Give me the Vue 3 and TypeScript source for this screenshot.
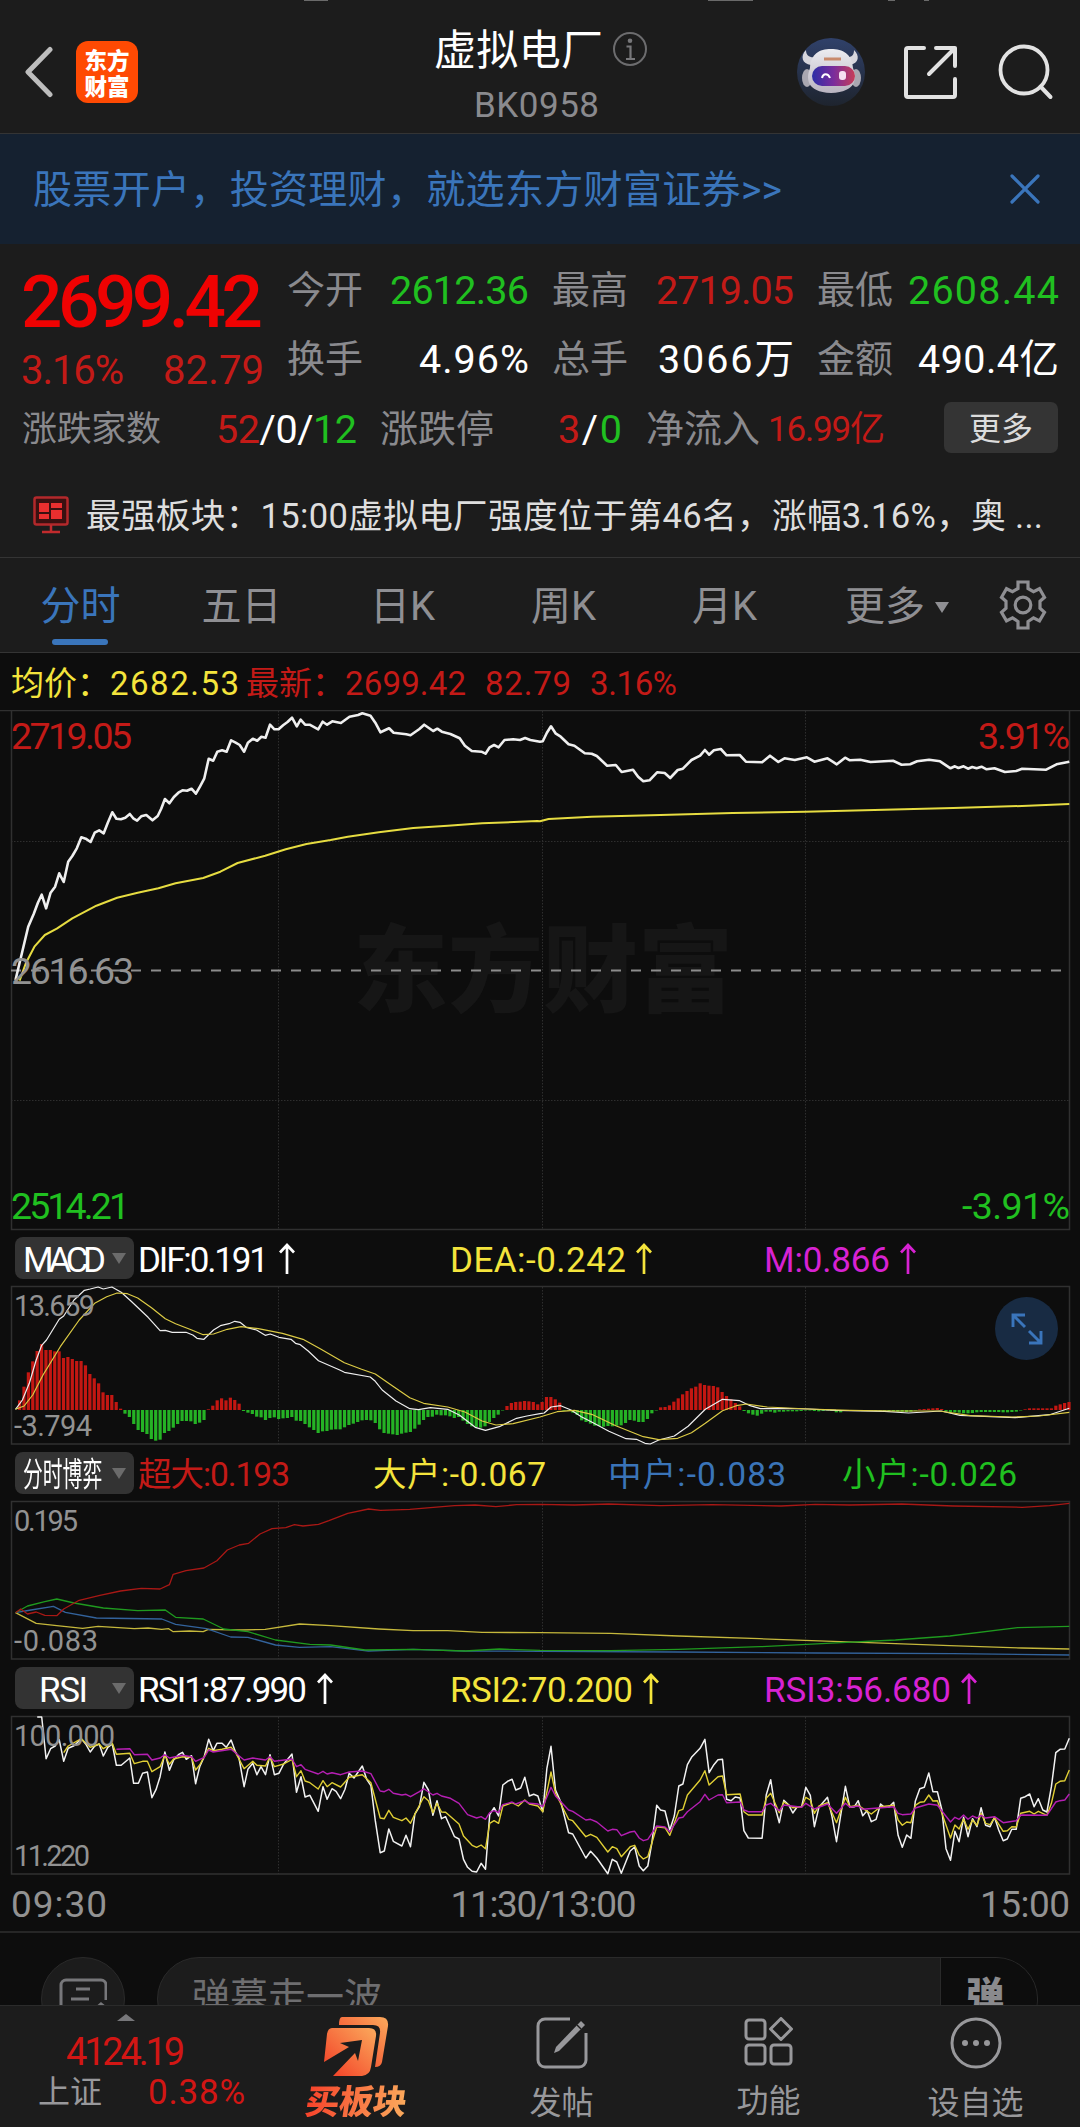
<script setup lang="ts">
import type { Directive } from 'vue'

// Tracks a label out (or in) so that it fills the given width in pixels.
const fit = (el: HTMLElement, width: number) => {
  const count = (el.textContent ?? '').trim().length
  if (count < 2) return
  const spacing = (width - el.getBoundingClientRect().width) / (count - 1)
  el.style.letterSpacing = `${spacing}px`
  el.style.marginRight = `${-spacing}px`
}
const vFit: Directive<HTMLElement, number> = { mounted: (el, { value }) => fit(el, value) }

// Samples are stored per half of the session, as "x,y" pairs in chart units.
const HALF = 540
const SX = 2.904
const SY = 3
const half = (src: string, ox: number, oy: number) =>
  src.trim().split(/\s+/).map((p) => {
    const [x, y] = p.split(',').map(Number)
    return `${(ox + x / SX).toFixed(1)},${(oy + y / SY).toFixed(1)}`
  }).join(' ')
const series = (oy: number, am: string, pm: string) => `${half(am, 0, oy)} ${half(pm, HALF, oy)}`

const price = series(550,
  `45,1290 60,1225 82,1130 98,1092 110,1058 121,1034 134,1075 147,1028 160,1010 172,970 185,996 198,935 210,918 223,895 236,862 249,866 263,876 275,848 288,841 301,850 313,818 326,787 338,806 351,808 364,803 377,792 388,806 398,812 410,799 425,795 443,811 458,798 468,776 479,747 492,760 505,741 518,728 530,721 543,722 556,716 569,731 581,709 593,686 606,626 619,632 631,605 645,601 658,605 671,571 683,577 696,585 709,605 720,578 734,566 747,572 759,560 771,563 784,524 797,538 809,538 822,526 835,516 848,503 862,529 873,509 886,524 899,524 924,538 937,515 950,524 965,514 990,519 1015,500 1040,495 1052,490 1076,497 1090,518 1105,547 1130,535 1143,548 1180,553 1192,556 1218,537 1232,524 1258,543 1270,536 1283,545 1308,552 1335,565 1350,587 1370,603 1398,605 1410,611 1422,592 1435,585 1448,592 1465,570 1490,568 1510,570 1525,564 1540,570`,
  `0,575 8,574 20,548 32,529 45,550 60,560 83,583 100,587 130,610 150,611 165,618 195,647 220,645 237,666 270,659 285,680 300,694 318,691 340,667 362,669 378,684 400,660 415,656 440,630 465,617 479,600 491,614 505,601 525,597 542,616 580,615 598,635 645,637 668,617 692,636 710,625 740,630 775,622 797,635 835,625 862,643 886,623 900,631 930,629 960,636 1025,632 1050,644 1075,643 1095,634 1130,629 1162,634 1192,655 1205,649 1215,654 1230,649 1243,656 1255,651 1268,655 1282,650 1297,658 1320,655 1350,666 1383,663 1400,656 1470,659 1500,643 1537,635`)
const average = series(550,
  `57,1292 75,1240 100,1190 130,1155 165,1136 210,1105 280,1067 340,1043 400,1028 460,1015 510,1000 590,984 640,965 690,939 770,917 830,898 890,882 960,870 1010,860 1100,847 1200,834 1300,827 1400,820 1560,813`,
  `0,814 25,807 150,800 350,795 560,789 770,785 1000,779 1200,774 1400,768 1537,762`)

const dif = series(1220,
  `45,568 65,540 85,490 105,420 121,376 135,360 172,298 185,288 215,240 245,211 262,207 285,201 300,207 325,201 352,217 380,243 430,292 465,332 480,331 500,337 540,337 560,345 572,355 592,358 620,330 640,317 665,311 682,304 697,307 715,322 745,330 770,346 785,342 810,352 845,358 858,370 872,374 895,393 925,422 985,449 1000,457 1075,471 1090,484 1110,510 1150,543 1190,566 1215,569 1250,563 1300,568 1335,586 1380,622 1410,631 1450,620 1500,595 1530,588`,
  `0,581 12,579 32,561 60,557 90,570 120,590 150,606 200,634 250,656 280,658 305,670 320,672 345,660 390,648 430,619 480,568 530,538 580,542 610,557 640,566 700,565 780,567 860,571 1000,574 1070,579 1165,573 1220,586 1380,593 1480,584 1537,565`)
const dea = series(1220,
  `45,568 70,558 95,525 125,465 175,380 230,300 275,250 310,230 340,219 370,221 400,234 440,263 480,296 510,311 555,329 590,344 620,342 660,328 700,320 750,326 820,340 880,358 930,386 1000,428 1050,448 1090,462 1140,498 1190,533 1230,550 1300,561 1350,576 1400,603 1440,615 1490,611`,
  `0,591 50,575 100,571 150,583 220,617 300,650 345,659 400,655 440,638 480,610 530,572 570,557 600,552 660,561 780,567 900,571 1030,573 1160,573 1250,587 1370,591 1450,588 1537,577`)

// Histogram bar ends, one per minute; values above ZERO are red, below are green.
const ZERO = 570
const histogram = [
  541, 500, 457, 424, 393, 372, 390, 390, 394, 394, 414, 411, 417, 423, 423, 436, 462, 475, 490, 517, 525, 525, 546, 566,
  581, 591, 612, 630, 636, 642, 657, 662, 659, 639, 633, 623, 612, 603, 603, 604, 612, 608, 600, 568, 557, 541, 535, 541,
  533, 540, 551, 573, 578, 582, 590, 592, 600, 594, 592, 597, 595, 594, 591, 602, 603, 612, 622, 630, 639, 634, 633, 629,
  628, 628, 622, 615, 611, 606, 601, 600, 601, 609, 628, 639, 641, 643, 645, 641, 638, 636, 626, 614, 600, 591, 590, 584,
  586, 586, 589, 594, 591, 602, 612, 619, 621, 623, 619, 606, 594, 584, 570, 558, 549, 546, 545, 543, 544, 546, 553,
  546, 531, 531, 538, 548, 572, 572, 578, 585, 601, 606, 611, 617, 618, 620, 618, 619, 617, 616, 609, 600, 602, 606, 606,
  597, 580, 570, 562, 561, 556, 545, 535, 523, 513, 505, 500, 490, 495, 497, 498, 502, 516, 528, 538, 549, 559, 573, 580,
  584, 587, 581, 575, 575, 578, 575, 575, 574, 574, 574, 573, 571, 571, 573, 574, 573, 571, 573, 577, 577, 571, 571, 571,
  571, 571, 571, 571, 572, 572, 572, 573, 574, 575, 575, 576, 575, 571, 568, 567, 566, 565, 564, 567, 574, 576, 577, 578,
  580, 580, 579, 577, 576, 576, 576, 576, 576, 577, 577, 576, 575, 571, 568, 565, 565, 565, 565, 565, 565, 557, 553, 549, 546,
]
const step = (1069 - 19.6) / (histogram.length - 1)
const bars = histogram.map((v, i) => ({
  x: 19.6 + i * step - 1.6,
  y: 1220 + Math.min(v, ZERO) / SY,
  h: Math.max(Math.abs(v - ZERO) / SY, 0.5),
  up: v < ZERO,
}))

const flow = {
  huge: series(1450,
    `45,488 60,477 80,492 105,486 130,496 165,497 185,477 230,451 290,436 350,423 410,415 465,417 492,404 503,373 540,362 592,354 630,332 660,300 695,285 722,280 755,252 790,236 830,233 855,224 880,228 925,223 955,212 1010,190 1070,177 1105,181 1190,178 1250,173 1320,167 1380,165 1440,170 1500,164`,
    `0,163 100,165 200,162 350,167 500,164 700,168 800,163 900,165 1050,162 1200,168 1400,172 1480,167 1537,160`),
  big: series(1450,
    `45,488 105,520 165,527 240,535 285,529 390,536 430,534 470,538 490,536 503,545 550,543 590,545 605,538 700,540 770,538 870,522 960,527 1100,537 1200,542 1300,542 1400,547`,
    `0,548 205,550 402,558 638,566 954,578 1190,587 1400,594 1537,597`),
  mid: series(1450,
    `45,488 90,480 155,469 190,487 280,504 470,507 510,523 600,536 670,561 720,562 800,585 870,592 960,590 1070,603 1200,598 1350,603`,
    `0,604 400,606 800,609 1200,611 1537,615`),
  small: series(1450,
    `45,488 80,468 130,455 165,447 215,459 300,474 400,482 480,480 510,502 590,507 650,537 720,545 800,570 900,583 960,585 1060,600 1200,598 1350,603 1450,597`,
    `0,601 205,602 402,598 638,590 875,578 1032,570 1190,558 1387,533 1537,529`),
}

const rsi = {
  fast: series(1660,
    `108,171 121,171 134,296 147,266 160,258 172,239 185,304 198,265 215,257 236,236 249,252 262,276 275,258 288,252 300,288 313,262 326,252 338,316 352,316 377,294 388,370 402,370 414,340 428,336 441,413 453,389 465,350 479,276 492,331 504,300 518,284 530,277 541,298 556,287 568,371 580,320 593,290 606,238 619,272 630,250 645,250 657,262 671,240 683,274 694,294 709,380 720,328 734,310 746,344 758,320 771,344 784,284 797,344 810,340 824,312 848,282 861,397 874,350 886,411 900,406 924,454 938,380 950,418 964,386 976,394 989,416 1002,388 1014,340 1028,354 1052,318 1065,358 1077,377 1090,482 1104,578 1116,573 1129,507 1142,544 1167,558 1179,526 1192,560 1205,462 1218,440 1231,367 1244,390 1257,466 1269,422 1282,476 1294,470 1320,530 1333,537 1346,598 1358,622 1371,634 1384,636 1397,610 1410,628 1422,464 1435,443 1448,468 1460,375 1474,364 1487,358 1498,390 1512,384 1524,352 1537,408 1550,403 1562,408`,
    `8,455 20,325 32,259 45,390 60,425 83,518 95,522 133,594 147,574 165,594 197,641 210,598 223,606 236,640 262,573 275,561 288,618 300,632 313,618 325,548 339,436 350,450 363,453 377,510 390,468 403,378 415,372 428,314 440,292 465,265 479,238 491,338 505,314 517,299 530,298 542,418 555,422 567,411 581,414 592,512 605,534 645,535 657,405 670,359 682,438 695,488 708,421 722,434 734,459 747,440 760,440 772,382 785,406 797,500 810,442 835,412 848,470 861,545 874,460 887,379 900,442 913,440 924,422 937,467 950,452 962,485 976,478 989,432 1000,442 1013,442 1027,427 1040,526 1052,562 1065,525 1077,535 1090,424 1103,386 1116,382 1129,339 1141,395 1154,395 1167,450 1179,566 1192,601 1205,514 1217,545 1230,472 1243,530 1256,476 1269,500 1281,443 1294,496 1307,500 1320,472 1332,510 1345,542 1357,537 1370,508 1383,508 1396,415 1409,410 1422,402 1435,440 1447,416 1460,450 1472,456 1485,380 1498,278 1510,268 1524,267 1537,235`),
  medium: series(1660,
    `185,278 198,258 236,236 262,262 288,252 300,266 326,250 338,283 377,280 390,311 414,304 428,304 441,335 465,320 479,286 492,313 504,297 530,290 556,292 568,330 580,315 606,265 619,272 645,268 671,262 683,276 709,326 734,304 746,316 771,318 784,290 797,320 824,312 848,298 861,350 874,332 886,363 900,368 924,387 938,362 950,380 964,368 989,381 1014,352 1052,344 1077,368 1104,474 1116,476 1129,451 1142,472 1167,482 1179,474 1192,490 1205,462 1231,410 1244,422 1257,458 1269,430 1282,456 1294,457 1333,492 1346,528 1371,556 1384,562 1397,555 1410,566 1422,490 1435,482 1448,490 1460,438 1487,428 1505,438 1524,420 1537,432 1562,438`,
    `8,455 32,336 45,400 83,478 95,482 133,530 147,523 165,532 197,576 210,560 223,566 236,590 262,560 275,556 288,585 300,597 313,590 339,500 363,503 377,526 403,452 415,448 428,405 465,360 479,332 491,375 517,350 530,348 542,404 581,402 592,455 605,465 645,465 657,415 670,400 695,458 708,426 734,443 760,440 772,412 785,420 797,460 810,438 835,428 861,488 887,412 900,440 924,436 962,462 989,440 1027,436 1040,480 1052,496 1065,486 1077,488 1090,436 1103,427 1116,425 1129,405 1141,423 1154,422 1167,460 1192,534 1205,495 1217,507 1230,477 1243,508 1256,480 1269,496 1281,460 1294,490 1307,494 1320,473 1345,514 1357,512 1370,500 1383,501 1396,460 1422,454 1435,462 1447,454 1472,466 1485,430 1498,372 1510,364 1524,362 1537,330`),
  slow: series(1660,
    `338,268 377,266 390,284 428,283 441,300 465,294 479,284 492,294 530,286 556,290 568,304 593,292 606,270 619,276 671,268 709,300 734,294 771,300 784,290 797,304 848,297 861,320 874,314 886,328 924,342 938,334 950,342 964,338 989,344 1014,336 1052,333 1077,341 1104,393 1116,395 1129,388 1142,400 1167,405 1179,403 1192,410 1218,395 1231,386 1257,405 1269,400 1282,408 1308,415 1333,430 1358,464 1384,474 1397,470 1410,478 1422,458 1435,452 1448,458 1460,434 1487,426 1498,432 1524,422 1537,430 1562,432`,
    `8,440 32,382 45,408 83,450 95,454 133,480 147,478 165,486 197,513 210,508 223,509 236,527 262,516 275,514 288,534 300,542 313,538 339,498 363,501 377,515 403,474 415,472 428,455 465,425 479,403 491,420 517,405 530,404 542,428 581,426 592,450 605,455 645,455 657,435 670,430 695,452 708,435 760,442 772,430 797,447 835,432 861,460 887,430 900,442 924,438 937,448 1027,440 1040,460 1052,464 1077,462 1090,444 1129,432 1154,436 1192,486 1205,472 1217,478 1230,465 1243,478 1256,468 1269,474 1281,466 1294,474 1320,470 1345,488 1383,482 1396,465 1472,466 1498,426 1510,422 1524,420 1537,402`),
}

const stats = [
  { label: '今开', value: '2612.36', tone: 'green', w: 139 },
  { label: '最高', value: '2719.05', tone: 'red', w: 138 },
  { label: '最低', value: '2608.44', tone: 'green', w: 151 },
  { label: '换手', value: '4.96%', tone: 'white', w: 110 },
  { label: '总手', value: '3066万', tone: 'white', w: 136 },
  { label: '金额', value: '490.4亿', tone: 'white', w: 141 },
]
const tabs = ['分时', '五日', '日K', '周K', '月K']
const gridX = [278.5, 542.5, 805.5]

const macdLegend = [
  { text: 'DIF:0.191', w: 131, tone: 'white' },
  { text: 'DEA:-0.242', w: 176, tone: 'yellow' },
  { text: 'M:0.866', w: 126, tone: 'magenta' },
]
const flowLegend = [
  { text: '超大:0.193', w: 152, tone: 'red' },
  { text: '大户:-0.067', w: 173, tone: 'yellow' },
  { text: '中户:-0.083', w: 178, tone: 'blue' },
  { text: '小户:-0.026', w: 175, tone: 'green' },
]
const rsiLegend = [
  { text: 'RSI1:87.990', w: 169, tone: 'white' },
  { text: 'RSI2:70.200', w: 183, tone: 'yellow' },
  { text: 'RSI3:56.680', w: 187, tone: 'magenta' },
]
</script>

<template>
  <main class="page">
    <header class="top">
      <i class="sliver s1" /><i class="sliver s2" /><i class="sliver s3" /><i class="sliver s4" />
      <svg class="back" width="30" height="56" viewBox="0 0 30 56"><path d="M27 5.500 5 28l22 22.500" fill="none" stroke="#bdbdbd" stroke-width="5" stroke-linecap="round" stroke-linejoin="round" /></svg>
      <div class="logo"><span>东方</span><span>财富</span></div>
      <div class="title">
        <div class="name">
          <span v-fit="169">虚拟电厂</span>
          <svg width="36" height="36" viewBox="0 0 36 36"><circle cx="18" cy="18" r="16" fill="none" stroke="#6c6c6e" stroke-width="2" /><circle cx="18" cy="9.700" r="2.300" fill="#77777a" /><path d="M14.500 15.500h4v12M14 28h9" fill="none" stroke="#77777a" stroke-width="2.200" /></svg>
        </div>
        <span v-fit="125" class="code">BK0958</span>
      </div>
      <div class="actions">
        <svg width="68" height="68" viewBox="0 0 68 68">
          <defs>
            <linearGradient id="sky" x1="0" y1="0" x2="0" y2="1"><stop offset="0" stop-color="#30416a" /><stop offset="1" stop-color="#1e242e" /></linearGradient>
            <linearGradient id="visor"><stop offset="0" stop-color="#2c2fa6" /><stop offset=".5" stop-color="#7a2c9c" /><stop offset="1" stop-color="#c73e58" /></linearGradient>
            <linearGradient id="shell" x1="0" y1="0" x2="0" y2="1"><stop offset="0" stop-color="#ececf0" /><stop offset="1" stop-color="#b9b4c0" /></linearGradient>
          </defs>
          <circle cx="34" cy="34" r="34" fill="url(#sky)" />
          <path d="M9 12c-6 6-4 14 5 15l5-8c-6 1-10-1-10-7zM57 12c6 6 5 13-4 15l-6-8c7 1 10-1 10-7z" fill="#d7d6dd" />
          <ellipse cx="10" cy="40" rx="5" ry="9" fill="#a9a7b1" /><ellipse cx="59" cy="40" rx="5" ry="9" fill="#a9a7b1" />
          <path d="M13 30C14 16 22 11 34 11s21 5 22 19c4 10 4 24-22 25C9 54 9 40 13 30z" fill="url(#shell)" />
          <rect x="15" y="28" width="43" height="20" rx="10" fill="url(#visor)" />
          <path d="M25 40c1-5 6-5 8 0" fill="none" stroke="#fff" stroke-width="2" />
          <rect x="42" y="33" width="7" height="9" rx="3" fill="#f5dff0" />
          <path d="M27 21h17" stroke="#c98a6c" stroke-width="3" />
        </svg>
        <svg width="56" height="56" viewBox="0 0 56 56" class="share"><path d="M22 4H6a2 2 0 0 0-2 2v45a2 2 0 0 0 2 2h45a2 2 0 0 0 2-2V35M34 4h19v18M53 4 27 30" fill="none" stroke="#e2e2e2" stroke-width="4" stroke-linecap="round" stroke-linejoin="round" /></svg>
        <svg width="58" height="58" viewBox="0 0 58 58" class="search"><circle cx="27" cy="26" r="23.500" fill="none" stroke="#e2e2e2" stroke-width="3.800" /><path d="m43.500 42.500 10 10.500" stroke="#e2e2e2" stroke-width="4" stroke-linecap="round" /></svg>
      </div>
    </header>

    <section class="banner">
      <span v-fit="749">股票开户，投资理财，就选东方财富证券&gt;&gt;</span>
      <svg width="30" height="30" viewBox="0 0 30 30"><path d="m2 2 26 26M28 2 2 28" stroke="#3a75bb" stroke-width="3.200" stroke-linecap="round" /></svg>
    </section>

    <section class="quote">
      <div class="figures">
        <div class="last">
          <strong v-fit="242">2699.42</strong>
          <div class="change"><span v-fit="103">3.16%</span><span v-fit="101">82.79</span></div>
        </div>
        <div class="stats">
          <div v-for="s in stats" :key="s.label" class="stat">
            <span class="label">{{ s.label }}</span><span v-fit="s.w" :class="s.tone">{{ s.value }}</span>
          </div>
        </div>
      </div>
      <div class="breadth">
        <span v-fit="139" class="label small">涨跌家数</span>
        <span v-fit="141" class="count"><b class="red">52</b>/0/<b class="green">12</b></span>
        <span class="label">涨跌停</span>
        <span v-fit="64" class="limit"><b class="red">3</b>/<b class="green">0</b></span>
        <span class="label inflow">净流入</span>
        <span v-fit="117" class="red net">16.99亿</span>
        <button class="more">更多</button>
      </div>
    </section>

    <section class="news">
      <svg width="36" height="38" viewBox="0 0 36 38"><rect x="1.500" y="1.500" width="33" height="27" rx="2" fill="#3a1111" stroke="#b3282b" stroke-width="2.500" /><path d="M6 7h10v9H6zM18 7h11v5H18zM6 18h10v5H6zM18 14h11v9H18z" fill="#ea2f2f" /><path d="M18 29v6M9 36h18" stroke="#c22b2d" stroke-width="2.500" /></svg>
      <span v-fit="957">最强板块：15:00虚拟电厂强度位于第46名，涨幅3.16%，奥 ...</span>
    </section>

    <nav class="tabs">
      <span v-for="(t, i) in tabs" :key="t" class="tab" :class="{ on: i === 0 }">{{ t }}</span>
      <span class="tab wide">更多<i class="caret" /></span>
      <svg width="48" height="50" viewBox="0 0 48 50"><path d="M19 2h10v6.500l5.500 3.200 6-3 5 8.600-4.500 4v7l4.500 4-5 8.600-6-3L29 41.500V48H19v-6.500l-5.500-3.600-6 3-5-8.600 4.500-4v-7l-4.500-4 5-8.600 6 3L19 8.500z" fill="none" stroke="#8f8f93" stroke-width="3.200" /><circle cx="24" cy="25" r="7.800" fill="none" stroke="#8f8f93" stroke-width="3.200" /></svg>
    </nav>

    <div class="summary">
      <span class="yellow">均价：</span><span v-fit="129" class="yellow">2682.53</span>
      <span class="red b">最新：</span><span v-fit="121" class="red">2699.42</span>
      <span v-fit="86" class="red d">82.79</span><span v-fit="87" class="red e">3.16%</span>
    </div>

    <svg class="chart" width="1080" height="521" viewBox="0 710 1080 521">
      <text x="353" y="1005" textLength="380" class="mark">东方财富</text>
      <g class="dots"><path v-for="x in gridX" :key="x" :d="`M${x} 711V1229`" /><path d="M11 841.500H1069M11 1100.500H1069" /></g>
      <path d="M0 710.500H1080" class="frame" /><path d="M11.500 711V1229.500H1069.500V711" class="frame thick" />
      <path d="M11 970.500H1069" stroke="#8c8c8c" stroke-width="2" stroke-dasharray="10 10" />
      <polyline :points="average" class="line" stroke="#e6dc41" stroke-width="2" />
      <polyline :points="price" class="line" stroke="#efefef" stroke-width="2.600" />
      <g class="axis big">
        <text x="11" y="749" textLength="121" class="red">2719.05</text>
        <text x="978" y="749" textLength="92" class="red">3.91%</text>
        <text x="11" y="984" textLength="123">2616.63</text>
        <text x="11" y="1219" textLength="119" class="green">2514.21</text>
        <text x="962" y="1219" textLength="108" class="green">-3.91%</text>
      </g>
    </svg>

    <div class="legend">
      <button class="pick"><span v-fit="83">MACD</span><i class="caret" /></button>
      <div v-for="l in macdLegend" :key="l.text" class="item" :class="l.tone"><span v-fit="l.w">{{ l.text }}</span><svg width="16" height="31" viewBox="0 0 16 31"><path d="M8 31V2M1 9.500 8 2l7 7.500" fill="none" stroke="currentColor" stroke-width="2.700" /></svg></div>
    </div>
    <div class="pane">
      <svg class="chart" width="1080" height="161" viewBox="0 1285 1080 161">
        <g class="dots"><path v-for="x in gridX" :key="x" :d="`M${x} 1287V1444`" /></g>
        <path d="M11.500 1286.500H1069.500V1444H11.500z" class="frame" />
        <rect v-for="b in bars" :key="b.x" :x="b.x" :y="b.y" width="3.200" :height="b.h" :fill="b.up ? '#c31712' : '#25b325'" />
        <polyline :points="dif" class="line" stroke="#eee" stroke-width="1.200" />
        <polyline :points="dea" class="line" stroke="#dccb45" stroke-width="1.200" />
        <g class="axis"><text x="14" y="1316" textLength="81">13.659</text><text x="14" y="1436" textLength="78">-3.794</text></g>
      </svg>
      <button class="expand"><svg width="32" height="32" viewBox="0 0 32 32"><path d="M2 14V2h12M2 2l12 12M30 18v12H18M30 30 18 18" fill="none" stroke="#3a75bb" stroke-width="2.900" /></svg></button>
    </div>

    <div class="legend four">
      <button class="pick"><span class="narrow">分时博弈</span><i class="caret" /></button>
      <div v-for="l in flowLegend" :key="l.text" class="item" :class="l.tone"><span v-fit="l.w">{{ l.text }}</span></div>
    </div>
    <svg class="chart" width="1080" height="161" viewBox="0 1500 1080 161">
      <g class="dots"><path v-for="x in gridX" :key="x" :d="`M${x} 1502V1659`" /></g>
      <path d="M11.500 1501.500H1069.500V1659H11.500z" class="frame" />
      <polyline :points="flow.big" class="line" stroke="#c5b83c" stroke-width="1.300" />
      <polyline :points="flow.mid" class="line" stroke="#33639c" stroke-width="1.300" />
      <polyline :points="flow.small" class="line" stroke="#1f9a1f" stroke-width="1.300" />
      <polyline :points="flow.huge" class="line" stroke="#a81815" stroke-width="1.300" />
      <g class="axis"><text x="14" y="1531" textLength="64">0.195</text><text x="14" y="1651" textLength="84">-0.083</text></g>
    </svg>

    <div class="legend">
      <button class="pick rsi"><span v-fit="49">RSI</span><i class="caret" /></button>
      <div v-for="l in rsiLegend" :key="l.text" class="item" :class="l.tone"><span v-fit="l.w">{{ l.text }}</span><svg width="16" height="31" viewBox="0 0 16 31"><path d="M8 31V2M1 9.500 8 2l7 7.500" fill="none" stroke="currentColor" stroke-width="2.700" /></svg></div>
    </div>
    <svg class="chart" width="1080" height="161" viewBox="0 1715 1080 161">
      <g class="dots"><path v-for="x in gridX" :key="x" :d="`M${x} 1717V1874`" /></g>
      <path d="M11.500 1716.500H1069.500V1874H11.500z" class="frame" />
      <polyline :points="rsi.fast" class="line" stroke="#f2f2f2" stroke-width="1.500" />
      <polyline :points="rsi.medium" class="line" stroke="#e0cf35" stroke-width="1.400" />
      <polyline :points="rsi.slow" class="line" stroke="#b51fb3" stroke-width="1.400" />
      <g class="axis"><text x="14" y="1746" textLength="101">100.000</text><text x="14" y="1866" textLength="76">11.220</text></g>
    </svg>

    <div class="times"><span v-fit="96">09:30</span><span v-fit="186">11:30/13:00</span><span v-fit="90">15:00</span></div>

    <section class="chat">
      <div class="bubble"><svg width="48" height="48" viewBox="0 0 48 48"><path d="M47 22V7a5 5 0 0 0-5-5H7a5 5 0 0 0-5 5v34h26M17 11h14M12 21h18M34 33l8-7 5 4" fill="none" stroke="#77777a" stroke-width="3" /></svg></div>
      <div class="input"><span>弹幕走一波</span><b>弹</b></div>
    </section>

    <footer class="dock">
      <div class="index">
        <i class="tri" />
        <strong v-fit="119">4124.19</strong>
        <div><span>上证</span><em v-fit="97">0.38%</em></div>
      </div>
      <div class="entry buy">
        <svg width="66" height="62" viewBox="0 0 66 62">
          <defs><linearGradient id="fire" x1="0" y1="1" x2="1" y2="0"><stop offset="0" stop-color="#f23a24" /><stop offset="1" stop-color="#fbaa5c" /></linearGradient></defs>
          <path d="M18 2h38q9 0 8 9l-6 36q-1 5-7 5l5-34q1-8-7-8H15q0-8 3-8z" fill="url(#fire)" />
          <path d="M8 13h37q8 0 7 8l-5 31q-1 8-9 9H9l22-23 3 8 4-21-22 3 9 4L0 47l3-28q1-6 5-6z" fill="url(#fire)" />
        </svg>
        <span v-fit="106">买板块</span>
      </div>
      <div class="entry">
        <svg width="52" height="52" viewBox="0 0 52 52"><path d="M34 2H9a7 7 0 0 0-7 7v34a7 7 0 0 0 7 7h34a7 7 0 0 0 7-7V16" fill="none" stroke="#98989b" stroke-width="3" /><path d="M45 4 49 8 23 34l-5 2 2-6z" fill="#98989b" /><path d="M41 8l4 4" stroke="#1c1c1c" stroke-width="1.500" /></svg>
        <span>发帖</span>
      </div>
      <div class="entry">
        <svg width="50" height="50" viewBox="0 0 50 50" fill="none" stroke="#98989b" stroke-width="3"><rect x="2" y="3" width="19" height="19" rx="3" /><path d="M37 1.500 47.500 12 37 22.500 26.500 12z" stroke-linejoin="round" /><rect x="2" y="28" width="19" height="19" rx="3" /><rect x="27" y="28" width="20" height="19" rx="3" /></svg>
        <span>功能</span>
      </div>
      <div class="entry">
        <svg width="52" height="52" viewBox="0 0 52 52"><circle cx="26" cy="26" r="24" fill="none" stroke="#98989b" stroke-width="3" /><g fill="#98989b"><circle cx="15" cy="26" r="3" /><circle cx="26" cy="26" r="3" /><circle cx="37" cy="26" r="3" /></g></svg>
        <span>设自选</span>
      </div>
    </footer>
  </main>
</template>

<style>
html, body { margin: 0; background: #0d0d0d; }
</style>

<style scoped>
.page { width: 1080px; height: 2127px; overflow: hidden; display: flex; flex-direction: column; background: #0d0d0d; color: #fff; font-family: "Noto Sans CJK SC", sans-serif; font-size: 38px; line-height: 1; }
.page * { box-sizing: border-box; white-space: nowrap; }
.page > * { flex-shrink: 0; }
/* Latin digits and Chinese share one baseline: the strut keeps the CJK line metrics. */
.page span, .page strong, .page em { display: inline-block; font-family: Roboto, "Noto Sans CJK SC", sans-serif; line-height: 0; }
.page span::before, .page strong::before, .page em::before { content: "\200b"; font-family: "Noto Sans CJK SC", sans-serif; line-height: var(--lh, 1); letter-spacing: 0; }
button { font: inherit; color: inherit; border: 0; padding: 0; }
b { font-weight: inherit; }
.red { color: #c31a17; fill: #c31a17; }
.green { color: #20c020; fill: #20c020; }
.white { color: #fff; }
.yellow { color: #f4e43c; }
.magenta { color: #d722d2; }
.blue { color: #3a74b8; }

.top { position: relative; height: 134px; background: #1c1c1c; border-bottom: 1px solid #343434; display: flex; padding-left: 24px; }
.sliver { position: absolute; top: 0; height: 1px; background: #6a6a6a; }
.s1 { left: 304px; width: 24px; } .s2 { left: 708px; width: 45px; } .s3 { left: 888px; width: 7px; } .s4 { left: 924px; width: 5px; }
.back { margin: 44px 0 0 -1px; }
.logo { margin: 41px 0 0 23px; width: 62px; height: 62px; border-radius: 12px; background: #ff4a03; display: flex; flex-direction: column; align-items: center; justify-content: center; font-size: 22.500px; font-weight: 900; --lh: 26px; padding-bottom: 1px; }
.title { margin-left: 296px; width: 214px; }
.name { display: flex; align-items: center; font-size: 42px; height: 50px; margin-top: 23px; }
.name > span { margin-bottom: 2px; }
.name svg { margin-left: 9px; margin-top: 2px; }
.code { margin: 11px 0 0 40px; font-size: 35px; color: #8a8a8e; }
.actions { display: flex; align-items: flex-start; margin-left: 149px; padding-top: 38px; }
.share { margin: 6px 0 0 37px; }
.search { margin: 6px 0 0 39px; }

.banner { height: 110px; background: #152130; color: #3a75bb; display: flex; align-items: center; justify-content: space-between; padding: 0 40px 6px 33px; font-size: 39px; }
.banner svg { margin-top: 5px; }

.quote { height: 229px; background: #1c1c1c; }
.figures { display: flex; padding: 0 21px; height: 148px; }
.last { width: 266px; color: #c31a17; }
.last strong { font-size: 73px; font-weight: 500; color: #ef0202; margin-top: 14px; --lh: 74px; }
.change { display: flex; justify-content: space-between; width: 243px; margin-top: 15px; font-size: 40px; }
.stats { width: 772px; display: grid; grid-template-columns: repeat(3, 242px); column-gap: 23px; grid-auto-rows: 69px; margin-top: 8px; }
.stat { display: flex; justify-content: space-between; align-items: center; font-size: 39.500px; }
.label { color: #8a8a8e; font-size: 38px; }
.breadth { display: flex; align-items: center; height: 69px; padding: 0 0 2px 22px; font-size: 39.500px; }
.breadth .small { font-size: 35px; }
.count { margin-left: 55px; }
.breadth .label:nth-child(3) { margin-left: 23px; }
.limit { margin-left: 64px; }
.inflow { margin-left: 24px; }
.net { font-size: 35px; margin-left: 8px; }
.more { width: 114px; height: 51px; border-radius: 7px; background: #343434; color: #dcdcdc; font-size: 32px; margin: 0 22px -4px auto; padding-bottom: 4px; }

.news { height: 84px; background: #1c1c1c; color: #dedede; font-size: 34.600px; display: flex; align-items: center; padding: 0 0 4px 33px; }
.news > span { margin-left: 17px; }
.news svg { margin-top: 4px; }

.tabs { height: 96px; background: #1c1c1c; border-top: 1px solid #343434; border-bottom: 1px solid #343434; display: flex; font-size: 40px; color: #8f8f93; }
.tab { position: relative; width: 161px; text-align: center; padding-top: 25px; }
.tab.on { color: #3a75bb; }
.tab.on::after { content: ""; position: absolute; left: 52px; top: 81px; width: 56px; height: 6px; border-radius: 3px; background: #3a75bb; }
.tab.wide { width: 184px; }
.tabs svg { margin: 22px 0 0 10px; }
.caret { display: inline-block; border: 7px solid transparent; border-top: 11px solid currentColor; border-bottom: 0; }
.wide .caret { margin-left: 10px; vertical-align: 7px; }

.summary { height: 57px; display: flex; align-items: center; font-size: 33px; padding: 0 0 1px 11px; }
.summary .b { margin-left: 7px; } .summary .d { margin-left: 19px; } .summary .e { margin-left: 19px; }

.chart { display: block; }
.frame { fill: none; stroke: #303030; stroke-width: 1.500; }
.dots { fill: none; stroke: #2e2e2e; stroke-width: 1; stroke-dasharray: 1.500 1.500; }
.line { fill: none; stroke-linejoin: round; }
.axis { font-family: Roboto, sans-serif; font-size: 29px; fill: #929292; }
.axis.big { font-size: 37.500px; }
.mark { font-size: 95px; font-weight: 900; fill: #161616; }

.legend { height: 54px; display: grid; grid-template-columns: 123px 312px 314px 1fr; align-items: center; padding-left: 15px; font-size: 35px; }
.legend.four { grid-template-columns: 123px 235px 235px 234px 1fr; font-size: 33.500px; }
.item { display: flex; align-items: center; }
.item > span { margin-bottom: 3px; }
.item svg { margin: 1px 0 0 10px; }
.pick { width: 119px; height: 42px; border-radius: 8px; background: #333; color: #fff; display: flex; align-items: center; justify-content: space-between; padding: 0 8px 0 8px; }
.pick > span { margin-bottom: 3px; --lh: 38px; }
.pick.rsi > span { margin-left: 16px; }
.pick .caret { color: #6b6b6b; }
.narrow { font-size: 33px; width: 80px; transform: scaleX(.6); transform-origin: 0 50%; }
.pane { position: relative; }
.expand { position: absolute; left: 995px; top: 12px; width: 63px; height: 63px; border-radius: 50%; background: #182b43; display: flex; align-items: center; justify-content: center; }

.times { height: 55px; display: flex; justify-content: space-between; align-items: center; padding: 0 10px 5px 11px; font-size: 37px; color: #929292; }
.chat { height: 74px; border-top: 2px solid #262626; display: flex; overflow: hidden; padding: 24px 42px 0 41px; }
.bubble { width: 84px; height: 84px; border-radius: 50%; background: #1c1c1c; border: 1px solid #2a2a2a; display: flex; justify-content: center; padding-top: 20px; flex-shrink: 0; }
.input { flex: 1; margin-left: 32px; height: 84px; border-radius: 42px; background: #1c1c1c; border: 1px solid #2a2a2a; display: flex; overflow: hidden; font-size: 38px; color: #6e6e70; }
.input span { flex: 1; padding: 17px 0 0 34px; }
.input b { width: 97px; background: #0d0d0d; font-weight: 900; color: #8a8a8d; padding: 16px 0 0 25px; border-left: 1px solid #2a2a2a; }

.dock { height: 122px; background: #1c1c1c; border-top: 1px solid #2b2b2b; display: flex; color: #98989b; font-size: 32px; }
.index { width: 280px; display: flex; flex-direction: column; color: #d21614; padding-left: 38px; }
.tri { margin: 8px 0 0 79px; width: 0; border: 9.500px solid transparent; border-bottom: 7px solid #77777a; border-top: 0; }
.index strong { font-weight: 400; font-size: 38px; margin: 9px 0 0 28px; align-self: flex-start; }
.index > div { display: flex; align-items: center; margin-top: 3px; }
.index > div span { color: #98989b; }
.index em { font-style: normal; font-size: 35px; margin-left: 46px; }
.entry { display: flex; flex-direction: column; align-items: center; width: 207px; padding-top: 11px; }
.entry span { margin-top: 15px; }
.entry.buy { width: 154px; padding-top: 9px; margin-right: 24px; }
.entry svg { flex-shrink: 0; }
.buy span { font-weight: 900; font-size: 34px; margin-top: 6px; transform: skewX(-8deg); background: linear-gradient(90deg, #f6412a, #fbaa5c); -webkit-background-clip: text; background-clip: text; color: transparent; }
</style>
